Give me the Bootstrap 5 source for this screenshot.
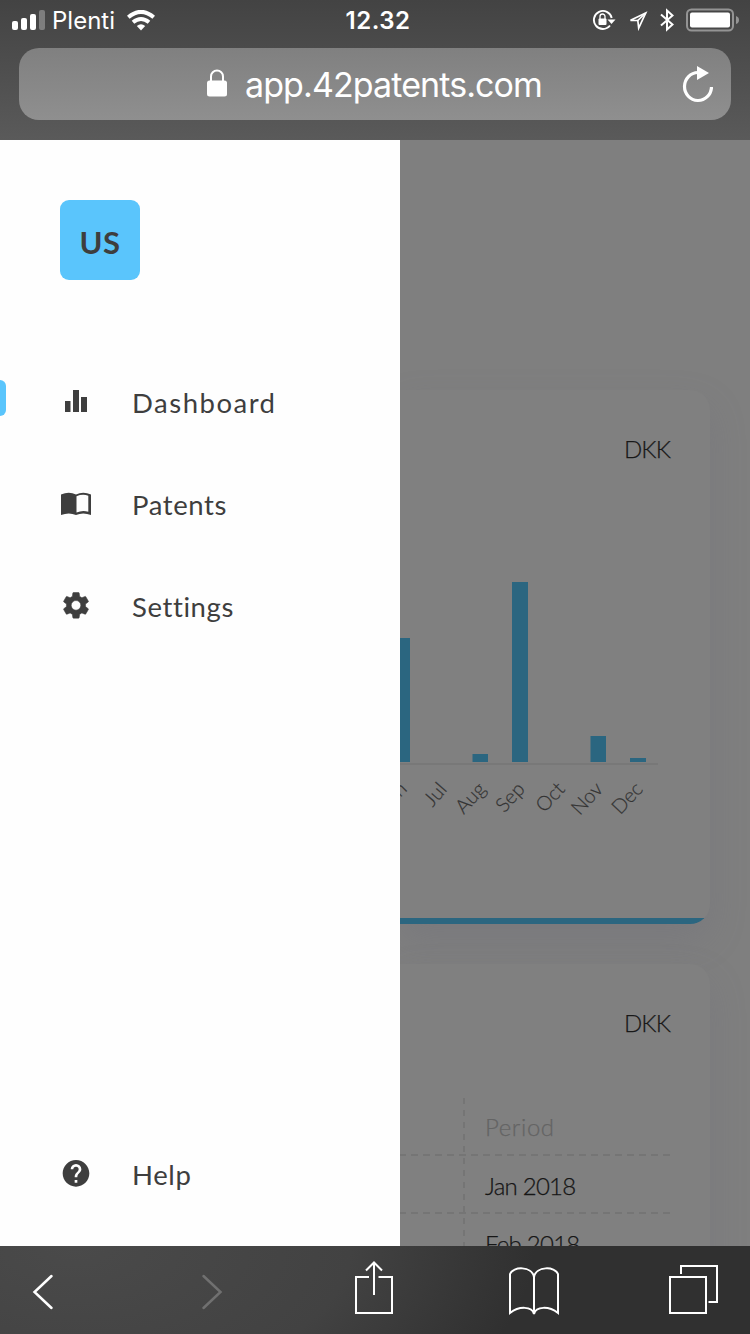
<!DOCTYPE html>
<html lang="en">
<head>
<meta charset="utf-8">
<meta name="viewport" content="width=device-width, initial-scale=1">
<title>42patents</title>
<link href="https://cdn.jsdelivr.net/npm/bootstrap@5.3.0/dist/css/bootstrap.min.css" rel="stylesheet">
<style>
body { width: 750px; height: 1334px; font-family: "Lato", sans-serif; line-height: 1; background: #808080; color: #3e3e3e; }
svg { display: block; flex: none; }
.browser-top { height: 140px; background: linear-gradient(#434343, #5a5a5a); font-family: "Inter", sans-serif; }
.status { height: 48px; padding: 0 10px 7px 12px; font-size: 24px; }
.status-side { flex: 1 1 0; }
.carrier { margin-left: 7px; letter-spacing: 0; }
.wifi { margin-left: 11px; }
.clock { font-weight: 600; letter-spacing: .5px; margin-left: 4px; }
.address { height: 72px; margin: 0 19px; border-radius: 20px; background: linear-gradient(#808080, #8f8f8f); padding: 0 18px 0 187px; }
.url { font-size: 34px; margin-left: 17px; letter-spacing: -.9px; padding-top: 1px; }
.sidebar { width: 400px; background: #fefefe; padding-top: 60px; padding-bottom: 21px; }
.avatar { width: 80px; height: 80px; margin-left: 60px; margin-bottom: 71px; border-radius: 9px; background: #5ac5fc; font-size: 31px; padding-top: 5px; letter-spacing: .6px; }
.side-link { height: 102px; padding: 1px 0 0 60px; gap: 40px; font-size: 27.5px; letter-spacing: .6px; color: #3e3e3e; }
.side-link svg { margin-top: -1px; }
.side-link.active { letter-spacing: 1.5px; }
.side-link.active::before { content: ""; position: absolute; left: 0; top: 29px; width: 6px; height: 36px; background: #5ac5fc; border-radius: 0 6px 6px 0; }
.content { padding-top: 250px; padding-right: 40px; gap: 40px; background: #7f7f7f; }
.panel { background: #808080; border-radius: 0 20px 20px 0; box-shadow: 0 16px 36px rgba(106, 106, 120, .24); flex: none; }
.panel-chart { height: 534px; }
.panel-chart .accent { height: 6px; background: #2b6680; }
.currency { font-size: 24px; font-weight: 300; color: #161616; padding: 47px 40px 0 0; text-align: right; letter-spacing: -.9px; -webkit-text-stroke: .25px #1f1f1f; }
.chart-label { font-size: 20px; fill: #333; font-weight: 300; stroke: #333; stroke-width: .2px; }
.periods { margin-top: 62px; height: 400px; width: 270px; }
.cell { height: 58px; font-size: 24px; font-weight: 300; color: #161616; letter-spacing: -.75px; -webkit-text-stroke: .25px currentColor; }
.cell span { padding-left: 85px; padding-top: 3px; }
.cell .heading { color: #646464; letter-spacing: .6px; padding-top: 1px; }
.toolbar { height: 88px; background: radial-gradient(ellipse 460px 240px at 10% 0, #4a4a4a 0, #424242 60%, #303030 100%); padding: 14px 0 0 32px; }
</style>
</head>
<body class="d-flex flex-column overflow-hidden">
<header class="browser-top flex-shrink-0 text-white">
  <div class="status d-flex align-items-center">
    <div class="status-side d-flex align-items-center">
      <svg width="33" height="20" fill="#fff" style="margin-top:-1px"><rect y="11" width="6" height="9" rx="2"/><rect x="9" y="8" width="6" height="12" rx="2"/><rect x="18" y="4" width="6" height="16" rx="2"/><rect x="27" width="6" height="20" rx="2" opacity=".3"/></svg>
      <span class="carrier">Plenti</span>
      <svg class="wifi" width="30" height="21" viewBox="0 0 30 21"><g fill="none" stroke="#fff" stroke-width="4"><path d="M2.300 7.200Q15-3.500 27.700 7.200M7 12.300Q15 5.800 23 12.300"/></g><path d="M10.800 16q4.200-3.400 8.400 0L15 20.500z" fill="#fff"/></svg>
    </div>
    <span class="clock">12.32</span>
    <div class="status-side d-flex align-items-center justify-content-end">
      <svg width="24" height="22" viewBox="0 0 24 22" fill="none" stroke="#fff" stroke-width="1.900" style="margin-top:-2px"><path d="M19.700 9A9 9 0 1 0 18 16.500"/><path d="M15.500 10.500H23.500l-4 4.500z" fill="#fff" stroke="none"/><rect x="6.500" y="9.500" width="8" height="6.500" rx="1" fill="#fff" stroke="none"/><path d="M8 10V7.500a2.500 2.500 0 0 1 5 0V10" stroke-width="1.300"/></svg>
      <svg width="20" height="20" viewBox="0 0 20 20" style="margin-left:12px" fill="none" stroke="#fff" stroke-width="1.700"><path d="M17.700 2 2.500 9.300l7.300.2.900 7.600z"/><path d="M17.700 2 9.800 9.500"/></svg>
      <svg width="14" height="24" viewBox="0 0 14 24" style="margin-left:12px;margin-top:-1px" fill="none" stroke="#fff" stroke-width="2"><path d="M1 6.500 12.500 16.500 7 21.500V2.500l5.500 5L1 17.500"/></svg>
      <svg width="54" height="24" viewBox="0 0 54 24" style="margin-left:12px;margin-top:-1px"><rect x="1" y="1.500" width="46" height="21" rx="4.500" fill="none" stroke="#949494" stroke-width="2"/><rect x="4" y="4.500" width="40" height="15" rx="2" fill="#fff"/><path d="M50 8q3 1 3 4t-3 4z" fill="#949494"/></svg>
    </div>
  </div>
  <div class="address d-flex align-items-center">
    <svg width="22" height="28" viewBox="0 0 22 28" style="margin-top:-2px"><rect x="1" y="11.500" width="20" height="16" rx="2.500" fill="#fff"/><path d="M5 12V7.500a6 6 0 0 1 12 0V12" fill="none" stroke="#fff" stroke-width="2"/></svg>
    <span class="url">app.42patents.com</span>
    <svg class="ms-auto" width="32" height="38" viewBox="0 0 32 38"><path d="M17 7.500A13.500 14 0 1 0 30.500 22" fill="none" stroke="#fff" stroke-width="3.200"/><path d="M16 1v14l12-7z" fill="#fff"/></svg>
  </div>
</header>
<main class="d-flex flex-grow-1 overflow-hidden">
  <nav class="sidebar nav flex-column flex-nowrap flex-shrink-0">
    <div class="avatar d-flex align-items-center justify-content-center fw-bold">US</div>
    <a class="side-link nav-link active position-relative d-flex align-items-center" href="#">
      <svg width="32" height="32" fill="#3e3e3e"><path d="M5 15h5.500v11H5zM13 4h6v22h-6zM21 11h6v15h-6z"/></svg>Dashboard</a>
    <a class="side-link nav-link d-flex align-items-center" href="#">
      <svg width="32" height="32"><path d="M1 6.500Q9 2.800 16 6.500q7-3.700 15 0V27q-8-3-15 0-7-3-15 0z" fill="#3e3e3e"/><path d="M16.500 8.300q6-2.600 11.800-.6v16q-6-1.800-11.800.8z" fill="#fefefe"/></svg>Patents</a>
    <a class="side-link nav-link d-flex align-items-center" href="#">
      <svg width="32" height="32" viewBox="0 0.500 24 24"><path fill="#3e3e3e" stroke="#3e3e3e" stroke-width=".4" d="M19.140 12.940c.04-.3.060-.61.060-.94 0-.32-.02-.64-.07-.94l2.030-1.580a.49.49 0 0 0 .12-.61l-1.920-3.320a.488.488 0 0 0-.59-.22l-2.390.96c-.5-.38-1.030-.7-1.620-.94l-.36-2.540a.484.484 0 0 0-.48-.41h-3.840c-.24 0-.43.17-.47.410l-.36 2.540c-.59.240-1.130.57-1.620.94l-2.390-.96c-.22-.08-.47 0-.59.220L2.740 8.870c-.12.210-.08.470.12.610l2.030 1.580c-.05.300-.09.630-.09.940s.02.640.07.940l-2.030 1.580a.49.49 0 0 0-.12.610l1.920 3.320c.12.220.37.290.59.220l2.390-.96c.5.380 1.030.7 1.620.94l.36 2.540c.05.240.24.410.48.410h3.840c.24 0 .44-.17.470-.41l.36-2.540c.59-.24 1.130-.56 1.620-.94l2.390.96c.22.080.47 0 .59-.22l1.920-3.320c.12-.22.070-.47-.12-.61zM12 15.600A3.600 3.600 0 1 1 12 8.400a3.600 3.600 0 0 1 0 7.200z"/></svg>Settings</a>
    <a class="side-link nav-link mt-auto d-flex align-items-center" href="#">
      <svg width="32" height="32" viewBox="0 0.500 24 24"><path fill="#3e3e3e" d="M12 2C6.480 2 2 6.480 2 12s4.480 10 10 10 10-4.480 10-10S17.520 2 12 2zm1 17h-2v-2h2zm2.070-7.750-.9.920C13.450 12.900 13 13.500 13 15h-2v-.5c0-1.100.45-2.100 1.170-2.830l1.240-1.260c.37-.36.590-.86.590-1.410a2 2 0 1 0-4 0H8a4 4 0 1 1 8 0c0 .88-.36 1.680-.93 2.250z"/></svg>Help</a>
  </nav>
  <section class="content d-flex flex-column flex-grow-1 overflow-hidden">
    <article class="panel panel-chart d-flex flex-column overflow-hidden">
      <div class="currency">DKK</div>
      <svg class="mt-auto" width="310" height="408" viewBox="400 510 310 408">
        <g fill="#2b6680"><path d="M394 638h16v124h-16zM472.500 754h15.500v8h-15.500zM512 582h16v180h-16zM590.500 736h15.500v26h-15.500zM630 758h16v4h-16z"/></g>
        <path d="M400 764h258" stroke="#787878" stroke-width="2"/>
        <g class="chart-label" text-anchor="end">
          <text transform="translate(408 790) rotate(-45)">Jun</text>
          <text transform="translate(448 790) rotate(-49)">Jul</text>
          <text transform="translate(487 790) rotate(-47)">Aug</text>
          <text transform="translate(526 790) rotate(-47)">Sep</text>
          <text transform="translate(566 790) rotate(-47)">Oct</text>
          <text transform="translate(604 790) rotate(-47)">Nov</text>
          <text transform="translate(644 790) rotate(-47)">Dec</text>
        </g>
      </svg>
      <div class="accent"></div>
    </article>
    <article class="panel">
      <div class="currency">DKK</div>
      <div class="periods position-relative">
        <svg class="position-absolute top-0 start-0" width="270" height="160" fill="none" stroke="#757575" stroke-width="2"><path d="M64 1v159" stroke-dasharray="6 6"/><path d="M0 58h270M0 116h270" stroke-dasharray="7 5" stroke-dashoffset="1"/></svg>
        <div class="cell d-flex align-items-center"><span class="heading">Period</span></div>
        <div class="cell d-flex align-items-center"><span>Jan 2018</span></div>
        <div class="cell d-flex align-items-center"><span>Feb 2018</span></div>
      </div>
    </article>
  </section>
</main>
<footer class="toolbar d-flex align-items-start flex-shrink-0">
  <svg width="22" height="60" fill="none" stroke="#fff" stroke-width="2.500" stroke-linecap="round"><path d="M19.500 16 2.500 32l17 16"/></svg>
  <svg width="22" height="60" style="margin-left:147px" fill="none" stroke="#707070" stroke-width="2.500" stroke-linecap="round"><path d="M2.500 16l17 16-17 16"/></svg>
  <svg width="40" height="60" style="margin-left:131px" fill="none" stroke="#fff" stroke-width="2"><path d="M15 17H2v36h36V17H24.500M20 35V3M12 10.500 20 2.500l8 8"/></svg>
  <svg width="52" height="60" style="margin-left:114px" fill="none" stroke="#fff" stroke-width="2"><path d="M26 54V17C24 6 5 6 2 14v39c9-7 22-7 24 1 2-8 15-8 24-1V14C47 6 28 6 26 17"/></svg>
  <svg width="50" height="60" style="margin-left:108px" fill="none" stroke="#fff" stroke-width="2"><path d="M2 17h36v36H2zM13 14V6H49v36h-8.500"/></svg>
</footer>
<script src="https://cdn.jsdelivr.net/npm/bootstrap@5.3.0/dist/js/bootstrap.bundle.min.js"></script>
</body>
</html>
